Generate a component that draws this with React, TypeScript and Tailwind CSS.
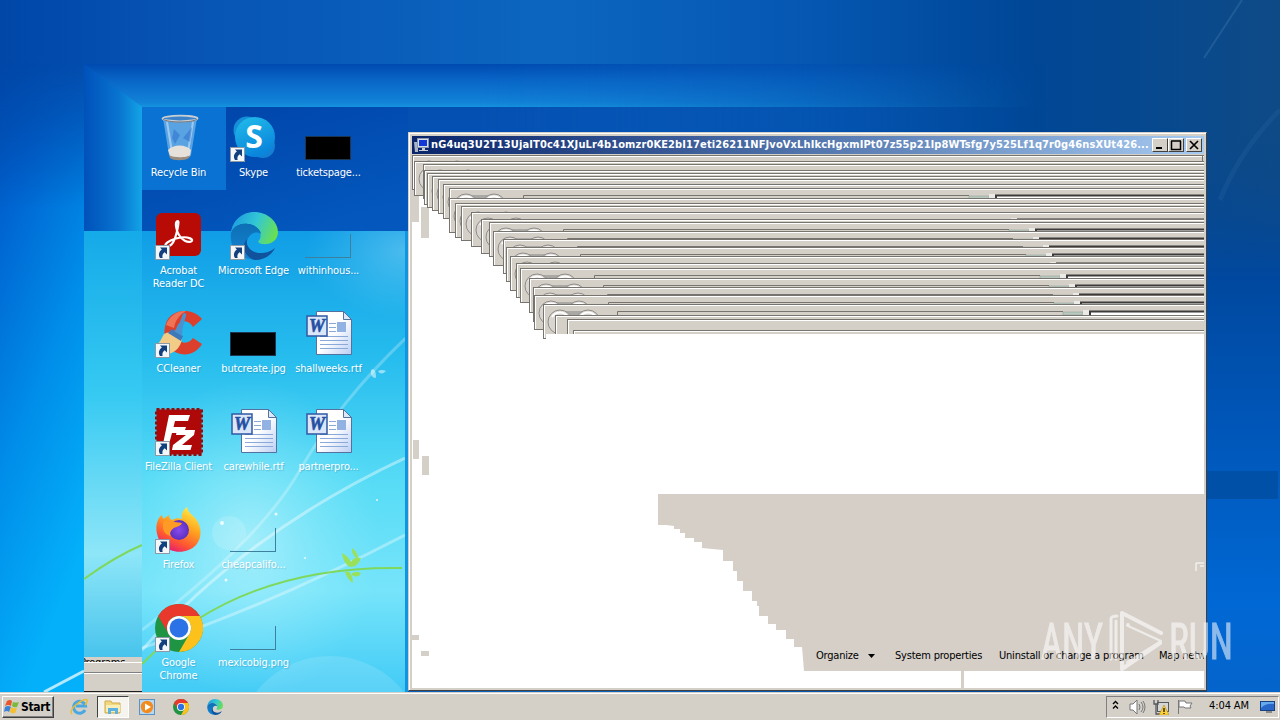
import type { ReactNode } from 'react';

interface GhostWindow {
  x: number;
  y: number;
  height?: number;
}

interface DesktopItem {
  label: string;
  icon: ReactNode;
  shortcut?: boolean;
}

// Trail of Explorer frames left behind while the window was dragged,
// relative to the client area of the main window.
const ghosts: GhostWindow[] = [
  { x: 0, y: 2 },
  { x: 2, y: 8 },
  { x: 11, y: 11 },
  { x: 12, y: 17 },
  { x: 15, y: 20 },
  { x: 20, y: 23 },
  { x: 26, y: 26 },
  { x: 31, y: 31 },
  { x: 37, y: 35 },
  { x: 37, y: 45 },
  { x: 43, y: 50 },
  { x: 49, y: 53 },
  { x: 59, y: 59 },
  { x: 69, y: 66 },
  { x: 77, y: 69 },
  { x: 81, y: 78 },
  { x: 91, y: 86 },
  { x: 94, y: 94 },
  { x: 98, y: 103 },
  { x: 104, y: 110 },
  { x: 108, y: 115 },
  { x: 117, y: 125 },
  { x: 121, y: 134 },
  { x: 122, y: 142 },
  { x: 131, y: 151 },
];

const blankGhosts: GhostWindow[] = [
  { x: 143, y: 162, height: 19 },
  { x: 155, y: 166, height: 15 },
  { x: 161, y: 177, height: 4 },
];

const TITLE =
  'nG4uq3U2T13UjaIT0c41XJuLr4b1omzr0KE2bI17eti26211NFJvoVxLhIkcHgxmIPt07z55p21lp8WTsfg7y525Lf1q7r0g46nsXUt426...';

function ShortcutArrow() {
  return (
    <svg className="absolute bottom-0 left-0 h-[15px] w-[15px]" viewBox="0 0 15 15">
      <rect x="0.5" y="0.5" width="14" height="14" fill="#f4f6f8" stroke="#8c9aa8" />
      <path d="M5 2.5h7v7l-2.3-2.3C7.6 8.6 7 10.4 7.6 13H5C3 9.800 4 6.800 6.900 4.600z" fill="#12407f" />
    </svg>
  );
}

function RecycleBinIcon() {
  return (
    <svg viewBox="0 0 48 48" className="h-12 w-12">
      <path d="M8 4l6 37c2 5 20 5 22 0l6-37z" fill="#8fc4ee" fillOpacity="0.6" />
      <path d="M12 8l5 30M38 8l-5 30" stroke="#c6e4fa" strokeWidth="2" opacity="0.6" />
      <path d="M19 15l6 6-5 9-3-6zM28 24l9-11-2 15z" fill="#2567c8" opacity="0.450" />
      <path d="M13 36c5-6 18-6 23 0l-1 6c-4 4-17 4-20 0z" fill="#e6e1da" />
      <path d="M14 41c4 3 18 3 21 0l-1 3c-4 3-16 3-19 0z" fill="#9a8d80" />
      <ellipse cx="25" cy="4.500" rx="17.500" ry="2.800" fill="#3b82c8" stroke="#c9ced4" strokeWidth="1.800" />
      <path d="M8 5c3 4 31 4 34 0" fill="none" stroke="#6c7076" strokeWidth="1" />
    </svg>
  );
}

function SkypeIcon() {
  return (
    <svg viewBox="0 0 48 48" className="h-12 w-12">
      <defs>
        <linearGradient id="skype" x1="0" y1="0" x2="0.400" y2="1">
          <stop offset="0" stopColor="#22bdea" />
          <stop offset="1" stopColor="#0a86dc" />
        </linearGradient>
      </defs>
      <circle cx="17" cy="16" r="13.500" fill="#1590d8" />
      <circle cx="33" cy="32" r="12" fill="#1480d4" />
      <circle cx="25" cy="23" r="20" fill="url(#skype)" />
      <text
        x="24"
        y="34"
        textAnchor="middle"
        fontFamily="Open Sans, sans-serif"
        fontWeight="700"
        fontSize="32"
        fill="#fff"
        className="[font-stretch:normal]"
      >
        S
      </text>
    </svg>
  );
}

function AcrobatIcon() {
  return (
    <svg viewBox="0 0 48 48" className="h-12 w-12">
      <rect x="1" y="1" width="45" height="43" rx="6" fill="#b90b05" />
      <path
        d="M23 9c-4 0-1.500 10 1 14 3 5 8.500 8 12 6.500 4-2-3-5-10-4-7 .800-14 4-15.500 7-1 3 5.500 3 8.500-4 2.500-5 5.500-19.500 4-19.500z"
        fill="none"
        stroke="#fff"
        strokeWidth="2.200"
      />
    </svg>
  );
}

function EdgeIcon({ id, className }: { id: string; className: string }) {
  return (
    <svg viewBox="0 0 48 48" className={className}>
      <defs>
        <linearGradient id={`${id}-top`} x1="0" y1="0.300" x2="1" y2="0.600">
          <stop offset="0" stopColor="#1d9be0" />
          <stop offset="0.500" stopColor="#33c8d4" />
          <stop offset="1" stopColor="#6be04e" />
        </linearGradient>
        <linearGradient id={`${id}-left`} x1="0" y1="0" x2="0" y2="1">
          <stop offset="0" stopColor="#0d6fb4" />
          <stop offset="1" stopColor="#1584d6" />
        </linearGradient>
      </defs>
      <path d="M1 21C2 9 12 0 24 0c14 0 24 10 24 20 0 9-8 13-16 12-5-1-4-3-2-5 2-5-1-14-12-15C9 11 3 16 1 21z" fill={`url(#${id}-top)`} />
      <path d="M1 21c3-8 11-10 17-9 8 1 13 7 13 10-5-4-13 0-14 8-1 7 5 15 11 17C12 50-1 38 1 21z" fill={`url(#${id}-left)`} />
      <path d="M17 27c-2 9 7 15 15 14 6 0 10-3 13-5-4 8-12 12-20 12-9-2-15-13-8-21z" fill="#10529b" />
    </svg>
  );
}

function CCleanerIcon() {
  return (
    <svg viewBox="0 0 48 48" className="h-12 w-12">
      <path d="M47 9C37-3 16-1 11 13c-4 12 0 24 9 29 10 5 21 2 27-8l-9-6c-4 6-11 6-15 1-4-6-2-14 3-17 5-2 9 0 12 5z" fill="#dc3f2c" />
      <path d="M11 15c3-9 12-15 20-14-7 4-11 10-12 17z" fill="#ee7455" />
      <path d="M9 24c6-3 12-1 18 5-1 7-6 13-13 15L2 36c3-5 5-8 7-12z" fill="#f2cb86" />
      <path d="M13 23l4-4 11 7-2 5z" fill="#3d78b8" />
      <path d="M19 21c3-2 5-6 9-17 1-2 4-1 3 2-3 10-4 14-4 20z" fill="#4a91d0" />
    </svg>
  );
}

function FileZillaIcon() {
  return (
    <svg viewBox="0 0 48 48" className="h-12 w-12">
      <rect x="1.500" y="1.500" width="45" height="45" fill="#b20a0a" stroke="#8c1010" strokeWidth="3" strokeDasharray="3 2" />
      <rect x="2.500" y="2.500" width="43" height="43" fill="#af0808" />
      <path d="M14 7h21l-2 6H20l-1.500 6H31l-2 6H17l-3 11H8z" fill="#fff" />
      <path d="M22 22h18l-1 5-12 10h10l-1.500 5H17l1-5 13-10h-10z" fill="#fff" />
    </svg>
  );
}

function WordDocIcon() {
  return (
    <svg viewBox="0 0 48 48" className="h-12 w-12">
      <defs>
        <linearGradient id="page" x1="0" y1="0" x2="1" y2="1">
          <stop offset="0.500" stopColor="#fff" />
          <stop offset="1" stopColor="#b9cdf2" />
        </linearGradient>
      </defs>
      <path d="M11.500 1.500h27l8 8v35h-35z" fill="url(#page)" stroke="#54719f" />
      <path d="M38.500 1.500v8h8z" fill="#dce7f8" stroke="#54719f" />
      <path d="M24 13.500h7M24 17.500h7M24 21.500h7M15 26.500h28M15 30.500h28M15 34.500h28M15 38.500h28" stroke="#8ba9d8" />
      <rect x="32" y="12" width="9" height="10" fill="#91b2e2" />
      <rect x="2" y="6" width="20" height="20" fill="#dbe7f9" stroke="#3059a4" strokeWidth="1.500" />
      <text
        x="12"
        y="22"
        textAnchor="middle"
        fontFamily="Liberation Serif, serif"
        fontWeight="700"
        fontStyle="italic"
        fontSize="18"
        fill="#244fa3"
        stroke="#244fa3"
        strokeWidth="0.600"
      >
        W
      </text>
    </svg>
  );
}

function FirefoxIcon() {
  return (
    <svg viewBox="0 0 48 48" className="h-12 w-12">
      <defs>
        <linearGradient id="fox" x1="0.800" y1="0" x2="0.300" y2="1">
          <stop offset="0" stopColor="#fff04a" />
          <stop offset="0.400" stopColor="#ffa61f" />
          <stop offset="0.750" stopColor="#ff5533" />
          <stop offset="1" stopColor="#e3177a" />
        </linearGradient>
        <radialGradient id="globe">
          <stop offset="0" stopColor="#8a4be8" />
          <stop offset="1" stopColor="#5b2fc4" />
        </radialGradient>
      </defs>
      <path d="M3 14c1-3 3-4 4-5 0 2 1 3 2 4 1-2 4-3 5-4 0 3 1 4 3 5 4-2 7-2 10-1-1-5 1-9 5-12 1 6 6 8 9 12 6 8 6 19 0 26-8 9-25 9-33 0C1 32 0 21 3 14z" fill="url(#fox)" />
      <circle cx="24" cy="24" r="10" fill="url(#globe)" />
      <path d="M9 15c4-1 8 0 11 1l7 1c-1 3-6 4-8 5-3 2-5 5-3 8-7-1-10-8-7-15z" fill="#ff9a24" />
    </svg>
  );
}

function ChromeIcon({ className }: { className: string }) {
  return (
    <svg viewBox="0 0 48 48" className={className}>
      <circle cx="24" cy="24" r="24" fill="#1f9443" />
      <path d="M3.200 12A24 24 0 0 1 44.800 12H24a12 12 0 0 0-10.400 18z" fill="#e8392c" />
      <path d="M44.800 12A24 24 0 0 1 24 48l10.400-18A12 12 0 0 0 24 12z" fill="#fcc11a" />
      <circle cx="24" cy="24" r="12" fill="#fff" />
      <circle cx="24" cy="24" r="9.400" fill="#2a72e6" />
    </svg>
  );
}

function BlackThumb() {
  return <div className="mt-[22px] mr-[2px] h-[24px] w-[46px] border border-[#1d3550] bg-black" />;
}

function EmptyThumb() {
  return <div className="mt-[22px] mr-[2px] h-[24px] w-[46px] border-r border-b border-[#3f7f9e]" />;
}

const items: DesktopItem[] = [
  { label: 'Recycle Bin', icon: <RecycleBinIcon /> },
  { label: 'Acrobat\nReader DC', icon: <AcrobatIcon />, shortcut: true },
  { label: 'CCleaner', icon: <CCleanerIcon />, shortcut: true },
  { label: 'FileZilla Client', icon: <FileZillaIcon />, shortcut: true },
  { label: 'Firefox', icon: <FirefoxIcon />, shortcut: true },
  { label: 'Google\nChrome', icon: <ChromeIcon className="h-12 w-12" />, shortcut: true },
  { label: 'Skype', icon: <SkypeIcon />, shortcut: true },
  { label: 'Microsoft Edge', icon: <EdgeIcon id="edge" className="h-12 w-12" />, shortcut: true },
  { label: 'butcreate.jpg', icon: <BlackThumb /> },
  { label: 'carewhile.rtf', icon: <WordDocIcon /> },
  { label: 'cheapcalifo...', icon: <EmptyThumb /> },
  { label: 'mexicobig.png', icon: <EmptyThumb /> },
  { label: 'ticketspage...', icon: <BlackThumb /> },
  { label: 'withinhous...', icon: <EmptyThumb /> },
  { label: 'shallweeks.rtf', icon: <WordDocIcon /> },
  { label: 'partnerpro...', icon: <WordDocIcon /> },
];

function Wallpaper() {
  return (
    <svg className="absolute inset-0 h-[692px] w-[1280px]" viewBox="0 0 1280 692">
      <defs>
        <linearGradient id="top" x1="0" x2="1" y1="0" y2="0">
          <stop offset="0" stopColor="#0047a8" />
          <stop offset="0.150" stopColor="#0754b4" />
          <stop offset="0.430" stopColor="#0c66c0" />
          <stop offset="0.630" stopColor="#0557b2" />
          <stop offset="0.800" stopColor="#004797" />
          <stop offset="1" stopColor="#0e4a86" />
        </linearGradient>
        <linearGradient id="left" x1="0" x2="0.300" y1="0" y2="1">
          <stop offset="0" stopColor="#0048b0" />
          <stop offset="0.300" stopColor="#0064d0" />
          <stop offset="0.650" stopColor="#008fea" />
          <stop offset="1" stopColor="#04b0fa" />
        </linearGradient>
        <linearGradient id="leftFade" x1="0" x2="0" y1="0" y2="1">
          <stop offset="0.090" stopColor="#fff" stopOpacity="0" />
          <stop offset="0.300" stopColor="#fff" />
        </linearGradient>
        <mask id="leftMask">
          <rect width="84" height="692" fill="url(#leftFade)" />
        </mask>
        <linearGradient id="right" x1="0" x2="0" y1="0" y2="1">
          <stop offset="0" stopColor="#0b4788" stopOpacity="0" />
          <stop offset="0.050" stopColor="#0b4788" stopOpacity="0" />
          <stop offset="0.300" stopColor="#00489f" />
          <stop offset="0.550" stopColor="#0056b8" />
          <stop offset="0.850" stopColor="#0068d4" />
          <stop offset="1" stopColor="#0564cc" />
        </linearGradient>
        <linearGradient id="band" x1="0" x2="0" y1="0" y2="1">
          <stop offset="0" stopColor="#004ab0" />
          <stop offset="0.350" stopColor="#0864c6" />
          <stop offset="0.900" stopColor="#1283d8" />
          <stop offset="1" stopColor="#1494de" />
        </linearGradient>
        <linearGradient id="bandFade" x1="0" x2="1" y1="0" y2="0">
          <stop offset="0" stopColor="#fff" />
          <stop offset="0.350" stopColor="#fff" />
          <stop offset="0.850" stopColor="#fff" stopOpacity="0" />
        </linearGradient>
        <mask id="bandMask">
          <rect x="84" y="64" width="1130" height="70" fill="url(#bandFade)" />
        </mask>
        <linearGradient id="side" x1="0" x2="1" y1="0" y2="0">
          <stop offset="0" stopColor="#0051ba" />
          <stop offset="0.600" stopColor="#0874d0" />
          <stop offset="1" stopColor="#13a4e6" />
        </linearGradient>
        <linearGradient id="sideLight" x1="0" x2="0" y1="0" y2="1">
          <stop offset="0" stopColor="#15aae8" />
          <stop offset="0.350" stopColor="#35c9f2" />
          <stop offset="0.700" stopColor="#8ee6f8" />
          <stop offset="1" stopColor="#30b8e8" />
        </linearGradient>
        <linearGradient id="darkTop" x1="0" x2="0.600" y1="0" y2="1">
          <stop offset="0" stopColor="#0043a8" />
          <stop offset="1" stopColor="#0357bd" />
        </linearGradient>
        <linearGradient id="inner" x1="0" x2="0" y1="0" y2="1">
          <stop offset="0" stopColor="#109de6" />
          <stop offset="0.280" stopColor="#27bdee" />
          <stop offset="0.550" stopColor="#58dcf6" />
          <stop offset="0.780" stopColor="#76e4fa" />
          <stop offset="1" stopColor="#42cbf6" />
        </linearGradient>
        <radialGradient id="glow">
          <stop offset="0" stopColor="#c9f6fc" stopOpacity="0.600" />
          <stop offset="1" stopColor="#9aeefb" stopOpacity="0" />
        </radialGradient>
        <clipPath id="innerClip">
          <rect x="142" y="231" width="263" height="461" />
        </clipPath>
      </defs>
      <rect width="1280" height="692" fill="url(#top)" />
      <rect width="84" height="692" fill="url(#left)" mask="url(#leftMask)" />
      <rect x="1207" y="100" width="73" height="592" fill="url(#right)" />
      <rect x="1207" y="471" width="71" height="28" fill="#0050a8" />
      <path d="M1242 0l-38 58" stroke="#3c79ac" strokeWidth="2" opacity="0.400" />
      <path d="M1280 110q-40 40-60 90" fill="none" stroke="#2a66a4" strokeWidth="5" opacity="0.250" />
      <rect x="84" y="64" width="1123" height="43" fill="url(#band)" mask="url(#bandMask)" />
      <rect x="142" y="107" width="1065" height="27" fill="#0450b2" mask="url(#bandMask)" />
      <path d="M84 64v167h58V107z" fill="url(#side)" />
      <rect x="84" y="231" width="58" height="461" fill="url(#sideLight)" />
      <path d="M44 692l40-21" stroke="#b4e9ff" strokeWidth="3" />
      <path d="M84 579q32-23 58-34" fill="none" stroke="#7ed85c" strokeWidth="2" />
      <rect x="142" y="107" width="266" height="124" fill="url(#darkTop)" />
      <rect x="142" y="107" width="84" height="83" fill="#0a72d2" />
      <rect x="142" y="231" width="263" height="461" fill="url(#inner)" />
      <rect x="405" y="231" width="3" height="461" fill="#1294e0" />
      <g clipPath="url(#innerClip)" fill="none">
        <ellipse cx="250" cy="540" rx="130" ry="160" fill="url(#glow)" />
        <ellipse cx="405" cy="250" rx="100" ry="70" fill="url(#glow)" opacity="0.500" />
        <circle cx="330" cy="750" r="94" fill="#fff" opacity="0.130" />
        <path d="M142 630Q260 540 300 470T408 336" stroke="#fff" strokeWidth="3" opacity="0.250" />
        <path d="M142 650Q250 530 405 458" stroke="#fff" strokeWidth="3" opacity="0.400" />
        <path d="M142 648Q270 605 405 535" stroke="#fff" strokeWidth="3" opacity="0.350" />
        <path d="M142 664Q240 565 402 568" stroke="#7ed85c" strokeWidth="2" />
        <path
          d="M342 553q6 3 9 9q3-6 10-4q-3 9-11 9q-7-4-8-14zM352 548q6 4 6 11q-7-4-6-11zM345 572q7-3 8 11q-6-4-8-11zM352 573q5-2 9 0q-3 6-9 2z"
          fill="#9be05a"
        />
        <path d="M371 370q5-3 5 8q-6 0-5-8zM378 371q4-2 8 0q-5 5-8 0z" fill="#fff" opacity="0.500" />
        <circle cx="229" cy="533" r="17" fill="#fff" opacity="0.150" />
        <g fill="#fff" opacity="0.800">
          <circle cx="222" cy="523" r="2" />
          <circle cx="276" cy="514" r="1.500" />
          <circle cx="226" cy="580" r="1.500" />
          <circle cx="305" cy="558" r="1" />
          <circle cx="377" cy="500" r="1" />
        </g>
      </g>
    </svg>
  );
}

function Ghost({ x, y }: GhostWindow) {
  return (
    <div
      className="absolute h-[35px] w-[820px] overflow-hidden border-t border-b border-l border-[#77746f] bg-[#d4d0c8] shadow-[inset_1px_1px_0_#fff]"
      style={{ left: x, top: y - 1 }}
    >
      <svg className="absolute top-0 left-0 h-[33px] w-[820px]" viewBox="0 0 820 33">
        <rect x="14" y="6" width="32" height="8" fill="#aaa8a4" />
        <circle cx="16" cy="17" r="12" fill="#d9d6d2" stroke="#8f8c87" />
        <path d="M8 12a9.500 9.500 0 0 1 16 0" stroke="#fff" strokeWidth="2" fill="none" />
        <circle cx="44" cy="17" r="12" fill="#d9d6d2" stroke="#8f8c87" />
        <path d="M36 12a9.500 9.500 0 0 1 16 0" stroke="#fff" strokeWidth="2" fill="none" />
        <path d="M73.500 12V6.500H519" stroke="#77746f" fill="none" />
        <path d="M519 7h20v3h-20z" fill="#b9c9be" stroke="#8b9a90" strokeWidth="0.500" />
        <rect x="539" y="5" width="6" height="6" fill="#eceae6" />
        <path d="M546 12V6.500h274" stroke="#3c3b39" strokeWidth="2" fill="#fff" />
        <rect x="547" y="8" width="273" height="20" fill="#fff" />
      </svg>
    </div>
  );
}

function WindowButton({ children }: { children: ReactNode }) {
  return (
    <div className="flex h-[14px] w-4 items-center justify-center border border-t-white border-r-[#404040] border-b-[#404040] border-l-white bg-[#d4d0c8]">
      <svg className="h-3 w-3" viewBox="0 0 12 12" fill="none" stroke="#000">
        {children}
      </svg>
    </div>
  );
}

function ExplorerWindow() {
  return (
    <div className="absolute top-[132px] left-[408px] flex h-[559px] w-[799px] flex-col border border-t-[#d4d0c8] border-r-[#404040] border-b-[#404040] border-l-[#d4d0c8] bg-[#d4d0c8] pt-[3px] pr-[2px] pb-[2px] pl-[3px] shadow-[inset_1px_1px_0_#fff]">
      {/* Title bar */}
      <div className="flex h-[18px] shrink-0 items-center bg-linear-to-r from-[#0a246a] to-[#a6caf0] pr-[2px] pl-[2px]">
        <svg className="h-4 w-4 shrink-0" viewBox="0 0 16 16">
          <path d="M0 5h4v10H1z" fill="#aab4c4" />
          <rect x="3.500" y="1.500" width="11" height="9" fill="#d8e0ec" stroke="#8795ad" />
          <rect x="5" y="3" width="8" height="6" fill="#1238d8" />
          <path d="M8 11h3v2h3v1H5v-1h3z" fill="#c8ccd4" />
        </svg>
        <div className="ml-px w-[720px] shrink-0 text-[11px] leading-[18px] font-bold tracking-[0.115px] whitespace-nowrap text-white">
          {TITLE}
        </div>
        <div className="ml-auto flex">
          <WindowButton>
            <path d="M2 9h6" strokeWidth="2" />
          </WindowButton>
          <WindowButton>
            <path d="M1.500 2v8.500h9V2M1 2h10" strokeWidth="1.500" />
          </WindowButton>
          <div className="w-[2px]" />
          <WindowButton>
            <path d="M2 2l8 8M10 2l-8 8" strokeWidth="1.700" />
          </WindowButton>
        </div>
      </div>

      {/* Client area */}
      <div className="relative flex-1 overflow-hidden bg-white">
        <div className="absolute top-0 left-0 h-[9px] w-full bg-[#d4d0c8]" />
        <div className="absolute top-[36px] left-0 h-[32px] w-[7px] bg-[#d4d0c8]" />
        <div className="absolute top-[53px] left-[9px] h-[31px] w-2 bg-[#d4d0c8]" />
        {ghosts.map((ghost, index) => (
          <Ghost key={index} {...ghost} />
        ))}
        <div className="absolute top-[2px] left-[790px] h-[6px] w-px bg-[#77746f]" />
        {blankGhosts.map((ghost, index) => (
          <div
            key={index}
            className="absolute w-[700px] border-t border-l border-[#77746f] bg-[#d4d0c8] shadow-[inset_1px_1px_0_#fff]"
            style={{ left: ghost.x, top: ghost.y - 1, height: ghost.height }}
          />
        ))}
        <div className="absolute top-[180px] left-[134px] h-[10px] w-[670px] bg-white" />
        <div className="absolute top-[286px] left-px h-[19px] w-[6px] bg-[#d4d0c8]" />
        <div className="absolute top-[302px] left-[10px] h-[19px] w-[7px] bg-[#d4d0c8]" />
        <div className="absolute top-[481px] left-0 h-[5px] w-[7px] bg-[#d4d0c8]" />
        <div className="absolute top-[497px] left-[9px] h-[5px] w-2 bg-[#d4d0c8]" />
        <svg className="absolute top-[340px] left-[246px] h-[194px] w-[547px]" viewBox="0 0 547 194">
          <path
            d="M0 0h547v177H146l-2-24h-8v-8h-8v-9h-10v-6h-8v-8h-9v-10h-2v-5h-5v-10h-9v-10h-6v-10h-4v-10h-10V56l-21-2v-6h-8v-4h-9v-5h-5v-4h-6v-3l-8-1H0z"
            fill="#d5cfc8"
          />
          <path d="M303 177h3v17h-3z" fill="#d5cfc8" />
          <path d="M547 69h-9v8M547 72h-5" fill="none" stroke="#fff" strokeWidth="1" />
        </svg>
        {/* Command bar */}
        <div className="absolute top-[495px] left-[404px] flex h-[14px] text-[11px] leading-[14px] tracking-[-0.2px] whitespace-nowrap text-black">
          <div className="flex w-[79px] items-center">
            Organize
            <svg className="ml-[9px] h-1 w-[7px]" viewBox="0 0 7 4">
              <path d="M0 0h7L3.500 4z" />
            </svg>
          </div>
          <div className="w-[104px]">System properties</div>
          <div className="w-[160px]">Uninstall or change a program</div>
          <div>Map network drive</div>
        </div>
      </div>
    </div>
  );
}

function Watermark() {
  return (
    <svg className="absolute top-[605px] left-[1035px] h-[75px] w-[205px]" viewBox="0 0 205 75">
      <g
        fill="#fff"
        stroke="#fff"
        strokeWidth="1"
        opacity="0.550"
        fontFamily="Roboto, sans-serif"
        fontSize="50"
      >
        <text x="6" y="54" textLength="62" lengthAdjust="spacingAndGlyphs">
          ANY
        </text>
        <text x="134" y="54" textLength="64" lengthAdjust="spacingAndGlyphs">
          RUN
        </text>
      </g>
      <g fill="none" stroke="#fff" strokeWidth="4" strokeLinejoin="round" strokeLinecap="round" opacity="0.600">
        <path d="M76 54V14q0-3 6-3M81 16v38" strokeWidth="3" />
        <path d="M126 28L87 8v44" />
        <path d="M93 20v0M87 64l38-26M87 64v-7" />
        <path d="M93 21l33 15-34 21" strokeWidth="2" />
      </g>
    </svg>
  );
}

function Taskbar() {
  return (
    <div className="flex h-7 shrink-0 items-center justify-between border-t border-[#d4d0c8] bg-[#d4d0c8] pl-[2px] shadow-[inset_0_1px_0_#fff]">
      <div className="flex items-center">
        <div className="flex h-[22px] w-[52px] items-center border border-t-white border-r-[#404040] border-b-[#404040] border-l-white pl-px shadow-[inset_-1px_-1px_0_#808080]">
          <svg className="h-4 w-4 shrink-0" viewBox="0 0 16 16">
            <path d="M3 2q3-2 5 0L7 7Q4 5 1 7z" fill="#e8562c" />
            <path d="M9 3q3 1 6 0l-2 5q-3 1-5-1z" fill="#79b93c" />
            <path d="M1 8q3-2 6 0l-2 5q-2-2-5 0z" fill="#3b82d8" />
            <path d="M7 8q3 2 6 1l-2 5q-3 1-5-1z" fill="#f6bf2c" />
          </svg>
          <span className="ml-px text-xs font-bold tracking-[-0.3px] text-black">Start</span>
        </div>
        <svg className="ml-4 h-[18px] w-[18px]" viewBox="0 0 18 18" fill="none">
          <path d="M15 12a6 6 0 1 1 .500-4H6" stroke="#49a7e2" strokeWidth="3" />
          <path d="M2 16Q-1 12 7 6t10-4q1 1-2 5" stroke="#e9bd35" strokeWidth="1.500" />
        </svg>
        <div className="ml-[9px] flex h-[22px] w-8 items-center justify-center border border-t-[#404040] border-r-white border-b-white border-l-[#404040] bg-[#f6f4ef]">
          <svg className="h-4 w-[18px]" viewBox="0 0 18 16">
            <path d="M1 2h6l1 2h8v10H1z" fill="#f1d77e" stroke="#d1ab4c" />
            <path d="M2 6h14v7H2z" fill="#faedb5" />
            <path d="M4 15V9h10v6h-3v-3H7v3z" fill="#5cb2e0" />
          </svg>
        </div>
        <svg className="ml-[10px] h-4 w-4" viewBox="0 0 16 16">
          <rect x="0.500" y="0.500" width="15" height="15" fill="#b9d8f0" stroke="#5a92c4" />
          <circle cx="8" cy="8" r="6.200" fill="#f38a1c" />
          <path d="M6 4.500v7L12 8z" fill="#fff" />
        </svg>
        <ChromeIcon className="ml-[18px] h-4 w-4" />
        <EdgeIcon id="edge-small" className="ml-[18px] h-4 w-4" />
      </div>

      {/* Notification area */}
      <div className="mr-px flex h-[22px] w-[173px] items-center border border-t-[#808080] border-r-white border-b-white border-l-[#808080] pl-[5px]">
        <svg className="mb-[3px] h-[10px] w-[7px]" viewBox="0 0 7 10" fill="none" stroke="#000" strokeWidth="1.400">
          <path d="M1 4l2.500-2.500L6 4M1 8.500L3.500 6 6 8.500" />
        </svg>
        <svg className="ml-[10px] h-4 w-[17px]" viewBox="0 0 17 16" fill="none" stroke="#77777a">
          <path d="M1 5h3l4-4v14l-4-4H1z" fill="#fff" />
          <path d="M10 5q2 3 0 6M12 3q4 5 0 10M14 2q4 6 0 12" />
        </svg>
        <svg className="ml-[7px] h-4 w-4" viewBox="0 0 16 16">
          <rect x="4.500" y="3.500" width="11" height="9" fill="#d6d6d6" stroke="#55585c" />
          <path d="M1 1v4h4V1M3 5v10h4" fill="none" stroke="#55585c" strokeWidth="1.300" />
          <path d="M11 6l5 10H6z" fill="#ffd43a" stroke="#b78a10" strokeWidth="0.600" />
          <path d="M11 9v4M11 14v1" stroke="#000" strokeWidth="1.200" />
        </svg>
        <svg className="ml-2 h-4 w-4" viewBox="0 0 16 16" fill="#fff" stroke="#77777a">
          <path d="M1.500 1v14M2 2h6l1 2h6l-2 3 1 2H8L7 8H2z" />
        </svg>
        <div className="ml-4 w-[42px] text-[11px] tracking-[-0.1px] whitespace-nowrap text-black">4:04 AM</div>
        <svg className="ml-[9px] h-3 w-[15px]" viewBox="0 0 15 12">
          <rect x="0.500" y="0.500" width="14" height="9" fill="#2867c7" stroke="#173f82" />
          <path d="M1 7q5-5 13-4V1H1z" fill="#65a9ef" />
          <path d="M6 11h6" stroke="#444" />
        </svg>
      </div>
    </div>
  );
}

export default function App() {
  return (
    <div className="flex h-[720px] w-[1280px] flex-col overflow-hidden bg-[#0054b4] font-['DejaVu_Sans_Condensed','DejaVu_Sans',sans-serif] [font-stretch:condensed]">
      <div className="relative h-[692px] shrink-0 overflow-hidden">
        <Wallpaper />

        {/* Slice of the start menu left on the screen */}
        <div className="absolute top-[657px] left-[84px] h-[35px] w-[58px] overflow-hidden border-b border-[#202020] bg-[#d4d0c8]">
          <div className="h-[6px] overflow-hidden border-b border-white">
            <div className="-ml-1 text-[11px] leading-[11px] tracking-[-0.2px] text-black">Programs</div>
          </div>
          <div className="mt-[9px] h-[2px] border-t border-b border-t-[#808080] border-b-white" />
        </div>

        <div className="relative ml-[141px] grid w-[225px] auto-cols-[75px] grid-flow-col grid-rows-[repeat(6,98px)] pt-[114px]">
          {items.map((item) => (
            <div key={item.label} className="flex flex-col items-center">
              <div className="relative flex h-12 w-12 justify-center">
                {item.icon}
                {item.shortcut && <ShortcutArrow />}
              </div>
              <div className="mt-[4px] text-center text-[11px] leading-[13px] tracking-[-0.15px] whitespace-pre text-white [text-shadow:1px_1px_1px_rgba(0,40,90,0.2)]">
                {item.label}
              </div>
            </div>
          ))}
        </div>

        <ExplorerWindow />
        <Watermark />
      </div>
      <Taskbar />
    </div>
  );
}
